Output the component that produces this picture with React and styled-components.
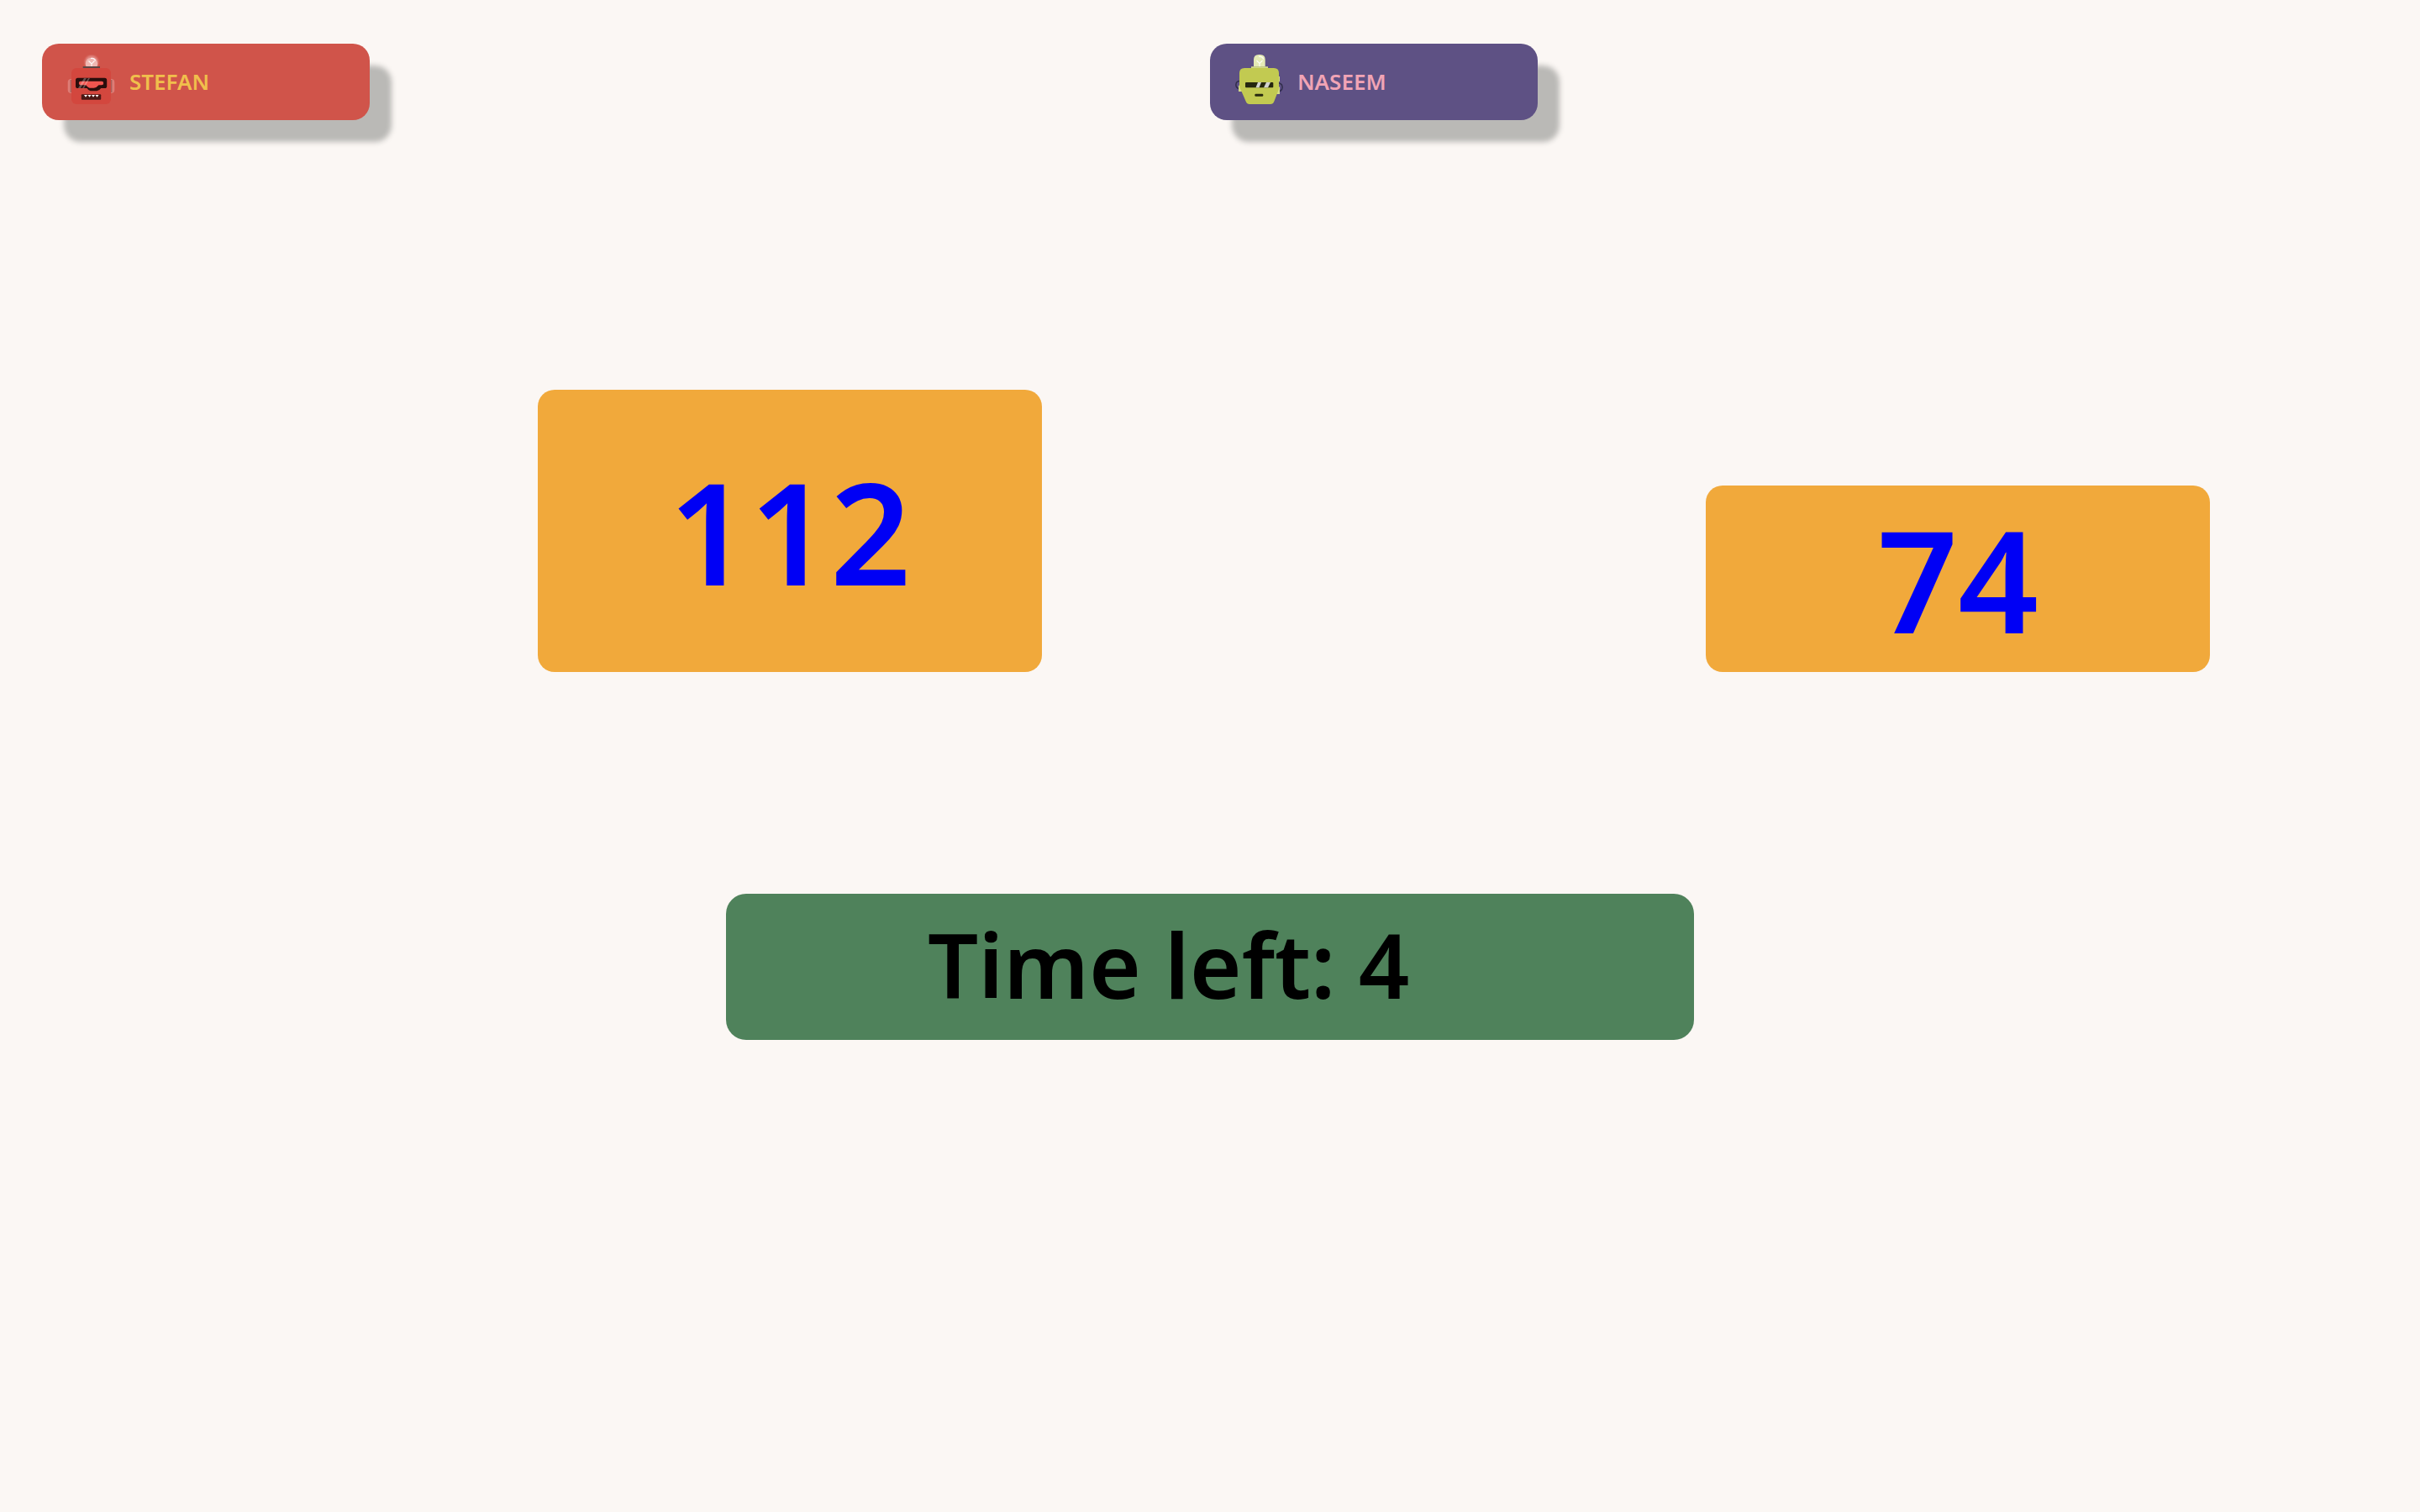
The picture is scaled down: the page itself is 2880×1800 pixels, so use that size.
import React from "react";
import styled, { createGlobalStyle } from "styled-components";

const GlobalStyle = createGlobalStyle`
  *, *::before, *::after {
    box-sizing: border-box;
  }
  body {
    margin: 0;
    min-height: 100vh;
    background: #fbf7f4;
    color: #000;
    font-family: "Noto Sans", "Open Sans", sans-serif;
    font-size: 26px;
  }
`;

const Page = styled.main`
  display: flex;
  flex-direction: column;
  gap: 264px;
  padding: 50px;
`;

const Players = styled.section`
  display: grid;
  grid-template-columns: repeat(2, 1fr);
`;

const Player = styled.article`
  display: flex;
  align-items: flex-start;
  min-height: 750px;
  padding-top: 2px;
`;

const Badge = styled.header`
  display: flex;
  align-items: center;
  gap: 13px;
  flex: none;
  width: 390px;
  padding: 13px 26px;
  border-radius: 20px;
  background: ${(p) => p.$background};
  color: ${(p) => p.$color};
  box-shadow: 26px 26px 6px #bab9b6;
`;

const Avatar = styled.svg`
  display: block;
  flex: none;
  width: 65px;
  height: 65px;
`;

const Name = styled.h2`
  margin: 0;
  font-size: 26px;
  line-height: 39px;
  font-weight: 600;
`;

const ScoreColumn = styled.div`
  display: flex;
  flex: 1;
  justify-content: center;
  align-items: flex-end;
  align-self: stretch;
`;

const Score = styled.div`
  display: flex;
  align-items: center;
  justify-content: center;
  width: 60%;
  border-radius: 20px;
  background: #f1a93b;
  color: #0000f5;
  font-size: 168px;
  line-height: 200px;
  font-weight: 600;
`;

const Timer = styled.section`
  align-self: center;
  width: 1152px;
  max-width: 100%;
  padding: 22px 240px 28px;
  border-radius: 24px;
  background: #4f825b;
  font-size: 106px;
  line-height: 124px;
  font-weight: 600;
  white-space: nowrap;
`;

function RedRobot() {
  return (
    <Avatar viewBox="0 0 65 65" aria-hidden="true">
      <defs>
        <filter id="bulb-glow" x="-50%" y="-50%" width="200%" height="200%">
          <feGaussianBlur stdDeviation="1" />
        </filter>
      </defs>
      <rect x="4.7" y="29" width="8" height="17" rx="4" fill="#de7d76" />
      <rect x="52.3" y="29" width="8" height="17" rx="4" fill="#de7d76" />
      <path d="M7.6 30h1.6v15H7.6zM55.8 30h1.6v15h-1.6z" fill="#aa615c" />
      <circle cx="33" cy="9" r="8" fill="#efb0ab" opacity=".6" filter="url(#bulb-glow)" />
      <path d="M26.6 14.2a7.2 7.2 0 1 1 12.8 0z" fill="#efb7b2" />
      <path d="M29.5 7.5 33 11l3.5-3.5M33 11v3.5M32 4.5c3-.6 5 .6 5.5 3" fill="none" stroke="#fff" strokeWidth="1.1" opacity=".9" />
      <rect x="22.7" y="14" width="20.3" height="2" fill="#5b4746" />
      <rect x="9" y="16" width="47" height="43" rx="6" fill="#d3473e" />
      <path
        d="M16.5 27.7h32q2.7 0 2.7 2.7v7q0 2.7-2.7 2.7h-4.3q-2.2 3.2-5 3.2h-7.5q-2.3 0-4.2-3.2h-11q-2.5 0-2.5-2.7v-7q0-2.7 2.5-2.7z"
        fill="#2a0e0c"
      />
      <path
        d="M20 31.7h25q2.2 0 2.2 2.3t-2.2 2.3h-3.5q-2.8 3.4-5.8 3.4H31q-2 0-4.8-3.4H20q-2.2 0-2.2-2.3t2.2-2.3z"
        fill="#f0554f"
      />
      <path d="M24 28h3l-7 12h-3zM29 28h2l-7 12h-2z" fill="#fff" opacity=".28" />
      <rect x="20.8" y="47.2" width="23.4" height="6.5" rx="1" fill="#4a1714" />
      <path d="M24 48h4l-2 2.8zM28.5 48h4l-2 2.8zM33 48h4l-2 2.8zM37.5 48h4l-2 2.8z" fill="#fff" />
    </Avatar>
  );
}

function GreenRobot() {
  return (
    <Avatar viewBox="0 0 65 65" aria-hidden="true">
      <path d="M9 31.5c-5 .5-6 7.5 0 9.5M56 34c5 1 6 8 0 10" fill="none" stroke="#302d4b" strokeWidth="1.5" />
      <path d="M8 36.7h7V44H8zM52 38.5h5V47h-5zM54 26h3v6h-3z" fill="#d5dc88" />
      <path d="M26 14.2V6q0-6 6-6h1.7q6 0 6 6v8.2z" fill="#e4eab5" />
      <path d="M29.5 7 33 10.5 36.5 7M33 10.5v4M32 2.5c3-.5 5 1 5.5 3" fill="none" stroke="#fff" strokeWidth="1.1" opacity=".9" />
      <rect x="23" y="14.2" width="20" height="2" fill="#d2da87" />
      <path
        d="M15 16h35q6 0 6 6v17q0 2-.7 3.8l-5 13Q49 59 46 59H21q-3 0-4.3-3.2l-6-13.8Q9 39 9 37V22q0-6 6-6z"
        fill="#c2ca51"
      />
      <rect x="16" y="33" width="33.3" height="6.2" rx="1" fill="#25270f" />
      <path d="M31 33h4l-2.5 6.2h-4zM41 33h5l-3 6.2h-5z" fill="#d2d3ce" />
      <rect x="27.3" y="46.7" width="10" height="3" rx="1.2" fill="#27290f" />
    </Avatar>
  );
}

const players = [
  { name: "STEFAN", score: 112, background: "#d0544a", color: "#f0bf4c", Robot: RedRobot },
  { name: "NASEEM", score: 74, background: "#5e5184", color: "#f1a4b5", Robot: GreenRobot },
];

export default function App() {
  return (
    <>
      <GlobalStyle />
      <Page>
        <Players>
          {players.map(({ name, score, background, color, Robot }) => (
            <Player key={name}>
              <Badge $background={background} $color={color}>
                <Robot />
                <Name>{name}</Name>
              </Badge>
              <ScoreColumn>
                {/* Each point adds three pixels to the height of the bar. */}
                <Score style={{ height: score * 3 }}>{score}</Score>
              </ScoreColumn>
            </Player>
          ))}
        </Players>
        <Timer role="timer">Time left: 4</Timer>
      </Page>
    </>
  );
}
